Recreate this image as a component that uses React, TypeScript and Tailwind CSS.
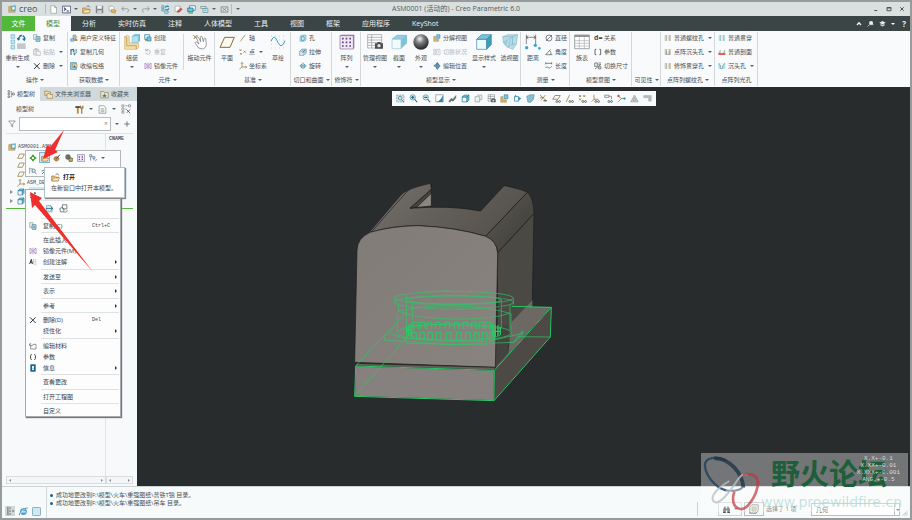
import type { ReactNode } from 'react';

type IconProps = { name: string; className?: string };

const cyan = '#7cc4dc';
const teal = '#2b7f9e';
const tan = '#d9b36c';
const ink = '#4a4f52';
const brown = '#8a6d2f';

const cube = (
  <g strokeLinejoin="round">
    <path d="M3 8h13v13H3z" fill="#f4fbfd" stroke={teal} strokeWidth="2" />
    <path d="M3 8l5-5h13l-5 5zM16 8l5-5v13l-5 5z" fill={cyan} stroke={teal} strokeWidth="2" />
  </g>
);

const folder = (
  <>
    <path d="M2 21V8h7l3 3h8v10z" fill="#e8c98e" stroke="#a8742c" strokeWidth="2" />
    <path d="M2 21l5-8h16l-4 8z" fill="#f8e7c4" stroke="#a8742c" strokeWidth="1.5" />
    <path d="M12 5c3-4 7-3 9 1" fill="none" stroke={ink} strokeWidth="2" />
  </>
);

const glasses = (
  <g fill="none" stroke={ink} strokeWidth="2">
    <circle cx="13" cy="20" r="2.5" />
    <circle cx="20" cy="20" r="2.5" />
  </g>
);

const mirror = (
  <path d="M3 3v18l6-5V8zM21 3v18l-6-5V8zM12 2v20" fill="none" stroke="#9a6cb4" strokeWidth="2" />
);

const camera = (
  <g>
    <path d="M11 14h3l1-2h4l1 2h3v8H11z" fill={ink} />
    <circle cx="17" cy="18" r="2.5" fill="#d8dcde" />
  </g>
);

const holes = (fill: string) => (
  <>
    <path d="M2 3h6v18H2zM15 3h6v18h-6z" fill={fill} />
    <path d="M8 3v18M15 3v18" stroke="#8a8e90" strokeWidth="1.5" />
  </>
);

// Small glyphs share a 24 unit box, ribbon glyphs a 48 unit one.
const small: Record<string, ReactNode> = {
  logo: (
    <>
      <path d="M2 5l8-2v12h11v7H2z" fill={tan} stroke={brown} />
      <path d="M10 4l12-2v14H10z" fill="#8fd0e4" stroke={teal} strokeWidth="1.5" />
      <path d="M13 7h6v6h-6z" fill="#fff" />
    </>
  ),
  new: <path d="M5 2h10l5 5v15H5zM15 2v5h5" fill="#fff" stroke="#85898b" strokeWidth="1.5" />,
  shell: (
    <>
      <path d="M1 3h22v18H1z" fill="#fff" stroke="#3a3f66" strokeWidth="2" />
      <path d="M5 7l5 4-5 4M12 16h7" fill="none" stroke="#3a3f66" strokeWidth="3" />
    </>
  ),
  folder,
  save: (
    <>
      <path d="M2 2h20v20H2z" fill="#85898c" />
      <path d="M6 2h12v8H6z" fill="#f2f4f4" />
      <path d="M6 14h12v8H6z" fill="#cfd3d4" />
    </>
  ),
  saveAs: (
    <>
      <path d="M3 3h9l4 4v8H3z" fill="#fff" stroke="#9a8a64" strokeWidth="1.5" />
      <path d="M9 11l12 3-2 8-11-3z" fill={tan} stroke={brown} />
    </>
  ),
  undo: <path d="M2 10h13c8 0 7 9 1 9M7 4l-5 6 5 6" fill="none" stroke="#84898b" strokeWidth="2" />,
  redo: <path d="M22 10H9c-8 0-7 9-1 9M17 4l5 6-5 6" fill="none" stroke="#84898b" strokeWidth="2" />,
  regen: (
    <>
      <path d="M2 2h6v6H2zM2 10h6v6H2zM10 16h9v6h-9z" fill="#bfe6f0" stroke={teal} strokeWidth="1.5" />
      <path d="M12 7c1-5 6-5 9-2M21 9c-1 5-6 5-9 2" fill="none" stroke={teal} strokeWidth="3" />
    </>
  ),
  erase: (
    <>
      <path d="M3 3h13v14H3z" fill="#fff" stroke="#8a8e90" strokeWidth="1.5" />
      <path d="M8 19l3-5 7-6 4 3-8 8z" fill="#d9534a" stroke="#84352f" />
    </>
  ),
  windows: (
    <>
      <path d="M7 2h15v12H7z" fill="#fff" stroke={teal} strokeWidth="2" />
      <path d="M2 8h14v10H2z" fill="#6fc5e4" stroke="#266786" strokeWidth="2" />
      <path d="M4 20h12v3H4z" fill="#41b24b" />
    </>
  ),
  close: <path d="M3 5h18v14H3zM7 8l10 8M17 8L7 16" fill="none" stroke="#777c7e" strokeWidth="2" />,
  screens: (
    <>
      <path d="M2 4h14v5H2zM8 9h13v11H8z" fill="#e8f3f6" stroke="#6f8d97" strokeWidth="2" />
      <path d="M11 12h7v5h-7z" fill={cyan} />
    </>
  ),
  copy: (
    <>
      <path d="M2 2h10v14H2z" fill="#eef4f6" stroke="#7b98a4" strokeWidth="2" />
      <path d="M9 8h12v14H9z" fill="#b5dbe6" stroke="#4c7c90" strokeWidth="2" />
      <path d="M12 13h7M12 17h7" stroke="#4c7c90" strokeWidth="1.5" />
    </>
  ),
  paste: (
    <>
      <path d="M2 4h15v17H2zM7 1h5v5H7z" fill="#e4e6e6" stroke="#b4b8ba" strokeWidth="2" />
      <path d="M10 10h12v12H10z" fill="#f6f7f8" stroke="#b4b8ba" strokeWidth="2" />
    </>
  ),
  delete: <path d="M3 4l17 17M20 4L3 21" stroke="#333739" strokeWidth="3" />,
  feature: (
    <>
      <path d="M2 14h9v8H2zM9 3h8v12H9z" fill="#9cc7e2" stroke="#4f7ea8" strokeWidth="1.5" />
      <circle cx="18" cy="9" r="4" fill={tan} />
      <path d="M13 15h9v6h-9z" fill="#c9813a" />
    </>
  ),
  copyGeom: (
    <>
      <path d="M3 3v18M3 7l7-4v9" fill="none" stroke="#2e5f86" strokeWidth="3" />
      <path d="M11 8l9-4v9l-8 8z" fill="#bcdcec" stroke={teal} strokeWidth="1.5" />
      <path d="M14 15v7" stroke={ink} strokeWidth="2" />
    </>
  ),
  shrink: (
    <>
      <path d="M2 2h17v20H2z" fill="#a7d9ea" stroke={teal} strokeWidth="2" />
      <path d="M7 6h14v10H7z" fill="#f1e2bd" stroke={brown} strokeWidth="1.5" />
      <path d="M9 16l4-7 5 7z" fill="#3e6690" />
    </>
  ),
  create: (
    <>
      <path d="M2 2h15v14H2z" fill="#dff1f6" stroke={teal} strokeWidth="2" />
      <path d="M9 9h12v12H9z" fill={cyan} stroke={teal} strokeWidth="2" />
      <path d="M3 18h7M6 15v7" stroke={brown} strokeWidth="2" />
    </>
  ),
  repeat: <path d="M7 6c7-4 13 2 11 8s-11 7-13 0M5 2v6h7" fill="none" stroke="#9b9fa1" strokeWidth="2" />,
  mirror,
  axis: <path d="M4 22L18 3" stroke={brown} strokeWidth="2" />,
  point: (
    <path d="M2 4l5 5M7 4L2 9M14 8l6 6M20 8l-6 6M3 15l5 5M8 15l-5 5" stroke={brown} strokeWidth="2" />
  ),
  csys: <path d="M9 2v13h14M9 15l-8 7M6 5l3-4 3 4M19 12l4 3-4 3" fill="none" stroke={brown} strokeWidth="2" />,
  hole: (
    <>
      <path d="M3 7l6-4h12v15l-6 4H3z" fill="#b8e0eb" stroke="#5a9db5" strokeWidth="1.5" />
      <path d="M8 8h7v11H8z" fill="#fff" stroke={teal} strokeWidth="2" />
    </>
  ),
  extrude: (
    <>
      <path d="M2 10l7-7h13v12l-7 7H2z" fill="#a8cfdf" stroke="#5b8ca3" strokeWidth="1.5" />
      <path d="M2 10h12v12H2z" fill="#dcebf0" stroke="#5b8ca3" />
      <path d="M10 14l9-8" stroke={ink} strokeWidth="2" />
    </>
  ),
  revolve: (
    <>
      <path d="M2 12l7-6v12zM22 12l-7-6v12z" fill="#8fc8dc" stroke={teal} strokeWidth="1.5" />
      <path d="M12 2v20" stroke={ink} strokeWidth="2" strokeDasharray="5 2" />
    </>
  ),
  explode: (
    <>
      <path d="M2 7h6v9h9v6H2z" fill={tan} stroke={brown} />
      <path d="M11 2h10v11H11z" fill={cyan} stroke={teal} strokeWidth="1.5" />
    </>
  ),
  state: (
    <path d="M2 4h6v6H2zM2 14h6v6H2zM11 4h10v16H11zM14 9h4M14 13h4" fill="none" stroke="#b8bcbe" strokeWidth="2" />
  ),
  editPos: (
    <path
      d="M9 7h9v9H9zM2 11l6-4v8zM22 12l-5-4v8zM13 1l4 5H9zM13 23l4-6H9z"
      fill="#5b9fc0"
      stroke="#2c5770"
      strokeWidth="1"
    />
  ),
  diameter: <path d="M12 3a9 9 0 100 18 9 9 0 000-18zM3 21L21 3" fill="none" stroke={ink} strokeWidth="2" />,
  angle: <path d="M2 20h20M2 20L17 4M14 8c4 3 4 8 3 12" fill="none" stroke={ink} strokeWidth="2" />,
  length: (
    <>
      <path d="M2 4h18M2 1v6M20 1v6" stroke={ink} strokeWidth="2" />
      <path d="M2 18c5-10 9 8 18-5" fill="none" stroke="#2d9cc0" strokeWidth="3" />
    </>
  ),
  switchDim: (
    <>
      <path d="M2 3h8v10H2zM13 3h8M13 8h8M3 21L20 8" fill="none" stroke={ink} strokeWidth="2" />
      <path d="M13 14h8v7h-8z" fill="#c7cbcd" stroke={ink} strokeWidth="1.5" />
    </>
  ),
  thread: holes('#d6ccb0'),
  sink: (
    <>
      {holes('#d6ccb0')}
      <path d="M7 10v9h9v-9" fill="none" stroke="#8a8e90" strokeWidth="2" />
    </>
  ),
  through: holes('#9fe8ee'),
  face: (
    <>
      <path d="M1 15h21v6H1z" fill="#e2604c" />
      <path d="M3 14l4-8v8zM16 14l4-8v8z" fill="#b7c6cc" stroke="#7c8a90" />
    </>
  ),
  counter: (
    <>
      <path d="M1 3h21v17H1z" fill="#9fe8ee" />
      <path d="M3 4l5 8v8h6v-8l6-8" fill="#f6f8f9" stroke="#6d8792" strokeWidth="2" />
    </>
  ),
  tree: (
    <path
      d="M3 2h5v5H3zM3 10h5v5H3zM3 18h5v5H3zM11 5h3v15h-3M14 12h3M17 9h5v6h-5z"
      fill="none"
      stroke={ink}
      strokeWidth="1.6"
    />
  ),
  folders: (
    <>
      <path d="M2 3h7l2 2h6v9H2z" fill="#f0dcae" stroke={brown} strokeWidth="1.5" />
      <path d="M8 10h6l2 2h7v10H8z" fill="#f6e6c2" stroke={brown} strokeWidth="1.5" />
    </>
  ),
  favorites: (
    <>
      <path d="M2 4h8l2 3h10v14H2z" fill="#f4e3b8" stroke={brown} strokeWidth="1.5" />
      <path d="M12 9l2 4 4 1-3 2 1 4-4-2-4 2 1-4-3-2 4-1z" fill="#2b7fb4" />
    </>
  ),
  tools: (
    <>
      <path d="M1 3h12v5H1z" fill={ink} />
      <path d="M5 8h5v15H5z" fill="#c98a3c" />
      <path d="M18 9v14M15 2v6h6V2" fill="none" stroke="#8a6a38" strokeWidth="3" />
    </>
  ),
  list: (
    <path d="M3 2h12l6 5v15H3zM7 10h10M7 14h10M7 18h10" fill="#fff" stroke="#6a6f71" strokeWidth="1.5" />
  ),
  treeFind: (
    <>
      <path d="M2 2h5v5H2zM2 10h5v5H2zM2 18h5v4H2zM10 4h6M10 12h3M18 2h5v5h-5z" fill="none" stroke="#777b7d" strokeWidth="1.5" />
      <path d="M13 13l9 9M14 21l8-8" stroke={ink} strokeWidth="2" />
    </>
  ),
  filter: <path d="M2 3h20l-8 9v9l-4-3v-6z" fill="#fff" stroke="#6e7376" strokeWidth="2" />,
  plus: <path d="M12 4v16M4 12h16" stroke="#777c7e" strokeWidth="3" />,
  plane: <path d="M8 6h14l-6 13H2z" fill="none" stroke={brown} strokeWidth="2" />,
  part: cube,
  target: (
    <>
      <path d="M12 1l4 6 7 5-7 5-4 6-4-6-7-5 7-5z" fill="#2f8f1e" />
      <circle cx="12" cy="12" r="4" fill="#e9f7d8" />
    </>
  ),
  brush: (
    <>
      <path d="M2 13c2-8 14-8 16 0s-14 14-16 0z" fill="#b88b48" stroke={brown} />
      <path d="M10 14L21 2" stroke={ink} strokeWidth="3" />
    </>
  ),
  sphereLock: (
    <>
      <circle cx="9" cy="9" r="8" fill="#6b6e70" />
      <path d="M12 12h10v10H12z" fill="#d7b266" stroke="#4b3f22" strokeWidth="2" />
    </>
  ),
  pattern: (
    <>
      <path d="M1 2h22v20H1z" fill="#f3eef7" stroke="#8769a4" strokeWidth="2" />
      <path d="M5 7h4v4H5zM14 7h4v4h-4zM5 14h4v4H5zM14 14h4v4h-4z" fill="#6d4f90" />
    </>
  ),
  relation: (
    <path d="M2 2h6v6H2zM12 8h6v6h-6zM8 5l4 6M5 8v12M15 14v5M19 22l4-7" fill="none" stroke="#537189" strokeWidth="2" />
  ),
  find: (
    <>
      <path d="M2 2v18M2 5h8v14" fill="none" stroke="#6b8797" strokeWidth="2" />
      <circle cx="14" cy="11" r="5" fill="#d6edf5" stroke="#4a6c7c" strokeWidth="2" />
      <path d="M17 15l5 7" stroke="#4a6c7c" strokeWidth="2" />
    </>
  ),
  insert: (
    <>
      <path d="M4 4h11l4 4v13H4z" fill="#c9eaf3" stroke="#5f8b9b" strokeWidth="1.5" />
      <path d="M2 12h18M15 7l6 5-6 5" fill="none" stroke="#23657f" strokeWidth="2" />
    </>
  ),
  replace: (
    <path d="M9 2h12v11H9zM2 12l6-3 5 4v8H4zM14 22c6 0 8-3 8-6" fill="#f6fbfd" stroke="#566268" strokeWidth="2" />
  ),
  note: (
    <>
      <path d="M2 18L7 4l3 14M4 13h6" fill="none" stroke="#333739" strokeWidth="3" />
      <path d="M14 3v17M17 5h5M17 10h5M17 15h5M17 20h5" fill="none" stroke="#8d9294" strokeWidth="1.5" />
    </>
  ),
  material: <path d="M5 21V11h5l2-4h9v14zM1 10l5-7M1 5v5h6" fill="none" stroke="#63686a" strokeWidth="2" />,
  params: <path d="M8 3c-5 4-5 14 0 18M16 3c5 4 5 14 0 18" fill="none" stroke="#333" strokeWidth="2.5" />,
  brackets: <path d="M7 4H3v16h4M16 4h4v16h-4" fill="none" stroke={ink} strokeWidth="2.5" />,
  info: (
    <>
      <path d="M4 1h16v22H4z" fill="#17628c" />
      <path d="M9 6h6v12H9z" fill="#fff" />
      <path d="M11 8h2v2h-2zM11 12h2v4h-2z" fill="#17628c" />
    </>
  ),
  edit: <path d="M3 21L20 4M2 12l7-2M15 3l6 6" stroke="#3b4143" strokeWidth="2" />,
  refit: (
    <>
      <path d="M2 3h19v18H2z" fill="#e6ecee" stroke="#7a8d95" strokeWidth="2" strokeDasharray="5 2" />
      <circle cx="11" cy="11" r="5" fill="#c2e7f3" stroke="#42788e" strokeWidth="2" />
      <path d="M15 15l6 7" stroke={ink} strokeWidth="2" />
    </>
  ),
  zoomIn: (
    <>
      <circle cx="10" cy="9" r="7" fill="#d9eff6" stroke="#4691ae" strokeWidth="2" />
      <path d="M6 9h8M10 5v8M15 14l7 8" stroke="#355e70" strokeWidth="3" />
    </>
  ),
  zoomOut: (
    <>
      <circle cx="10" cy="9" r="7" fill="#d9eff6" stroke="#4691ae" strokeWidth="2" />
      <path d="M6 9h8M15 14l7 8" stroke="#355e70" strokeWidth="3" />
    </>
  ),
  repaint: (
    <>
      <path d="M2 2h20v19H2z" fill="#fff" stroke="#8c9498" strokeWidth="2" />
      <path d="M21 3v18H3c8-2 14-8 18-18z" fill="#2f86a6" />
    </>
  ),
  spin: <path d="M2 19l7-8 4 3 8-10v6l-7 9-5-2-4 5z" fill="#6c7173" stroke={ink} />,
  layers: <path d="M3 7h12v14H3zM8 3h13v12h-6" fill="#eef2f3" stroke="#9ba3a6" strokeWidth="2" />,
  views: (
    <>
      <path d="M3 2h17v17H3zM3 7h17M3 12h17M9 2v17" fill="#fff" stroke="#7a8083" strokeWidth="1.5" />
      {camera}
    </>
  ),
  section: (
    <>
      <path d="M4 7h11v12H4z" fill="#fff" stroke={teal} strokeWidth="2" />
      <path d="M15 7l7 5-7 6zM7 1l3 6H4z" fill="#2f91b4" />
    </>
  ),
  persp: <path d="M2 6l8-4h12l-2 12-7 8H5z" fill="#86bdd0" stroke="#5590a8" strokeWidth="1.5" />,
  datums: (
    <>
      <path d="M3 3l16 14M17 3L5 17M2 10h8" stroke={brown} strokeWidth="2" />
      <path d="M12 18h9" stroke={ink} strokeWidth="3" />
    </>
  ),
  planeView: (
    <>
      <path d="M8 4h14l-6 10H2z" fill="none" stroke={brown} strokeWidth="2" />
      {glasses}
    </>
  ),
  axisView: (
    <>
      <path d="M3 21L12 3" stroke={brown} strokeWidth="2" />
      {glasses}
    </>
  ),
  pointView: (
    <>
      <path d="M3 3l5 5M8 3L3 8M14 3l5 5M19 3l-5 5M3 12l5 5M8 12l-5 5" stroke={brown} strokeWidth="2" />
      {glasses}
    </>
  ),
  csysView: (
    <>
      <path d="M8 2v12h12M8 14l-6 6" fill="none" stroke={brown} strokeWidth="2" />
      {glasses}
    </>
  ),
  noteView: (
    <>
      <path d="M2 3h11v6H2zM13 6h7v8" fill="none" stroke="#777" strokeWidth="2" />
      {glasses}
    </>
  ),
  center: (
    <>
      <path d="M3 5l9 7h9M12 12l-8 8" fill="none" stroke="#3a8c5a" strokeWidth="2" />
      <circle cx="4" cy="5" r="3" fill="#c5453c" />
      <circle cx="20" cy="12" r="3" fill="#2f7fb0" />
    </>
  ),
  warn: <path d="M12 3l10 18H2zM12 9l4 8H8z" fill="#d6d9da" stroke="#9a9fa1" strokeWidth="2" />,
  flag: <path d="M2 4h20v15h-7v-9H2z" fill="#b5b9bb" stroke="#9a9fa1" strokeWidth="1" />,
  sidebar: (
    <>
      <path d="M0 0h24v24H0z" fill="#cfd6d8" />
      <path d="M7 2v20M12 3v4M12 10v4M12 17v4M17 12h5" stroke={ink} strokeWidth="2" />
    </>
  ),
  globe: (
    <>
      <circle cx="12" cy="12" r="9" fill="#4a9fcc" />
      <path d="M2 20C6 8 14 4 23 4M5 13h13" fill="none" stroke="#e5f4fa" strokeWidth="3" />
      <path d="M1 22C2 10 14 2 23 3" fill="none" stroke="#2c6f9a" strokeWidth="2" />
    </>
  ),
  pane: <rect x="1" y="1" width="22" height="22" rx="3" fill="#cfe8f3" stroke="#5f93ab" strokeWidth="2" />,
  binoculars: <path d="M3 21V11l4-7h3v5h4V4h3l4 7v10h-7v-7h-4v7z" fill="#4b4b4b" />,
  pick: (
    <>
      <path d="M2 7l5-5h15v14l-5 6H2z" fill="#f5f5f0" stroke="#6e6e66" strokeWidth="2" />
      <path d="M7 7h10v10H7z" fill="#a5d6ea" stroke="#6e6e66" />
      <path d="M9 9l7 7-7 2z" fill="#e9b440" />
    </>
  ),
  search: (
    <>
      <circle cx="14" cy="10" r="7" fill="#e8ecec" />
      <path d="M2 22l7-6h13" fill="none" stroke="#c9cfcf" strokeWidth="3" />
    </>
  ),
  cap: (
    <>
      <path d="M12 3l11 6-11 6L1 9z" fill="#e8ecec" />
      <path d="M5 13v6l7 3 7-3v-6l-7 4z" fill="#c9cfcf" />
    </>
  ),
  up: <path d="M4 16l8-9 8 9" fill="none" stroke="#f2f4f4" strokeWidth="5" />,
};

const large: Record<string, ReactNode> = {
  regenerate: (
    <>
      <path d="M3 2h11v11H3zM3 18h11v11H3zM3 34h11v11H3z" fill="#bfe6f1" stroke="#6fb4cb" strokeWidth="2" />
      <path d="M21 28h26v17H21z" fill="#c4c8ca" />
      <path d="M24 15l6-8M38 6c5 1 6 5 5 9" fill="none" stroke="#1f6f96" strokeWidth="4" />
      <path d="M20 11l4 9 8-6zM48 13l-5 9-7-8zM27 3l10-1-4 8z" fill="#1f6f96" />
    </>
  ),
  assemble: (
    <>
      <path d="M2 8l8-4 6 3v20h28v14l-7 5H2z" fill="#f1dba6" stroke={tan} strokeWidth="2" />
      <path d="M2 8l6 3v24h29v11" fill="none" stroke="#b9934a" strokeWidth="2" />
      <path d="M25 7l6-5h17v17l-6 6H25z" fill="#7cc9e0" stroke="#4fa3be" strokeWidth="2" />
      <path d="M25 7h17v18H25z" fill="#b3e3ef" />
    </>
  ),
  drag: (
    <>
      <path d="M4 4l12 10M16 3L5 15" stroke="#9a7b3a" strokeWidth="3" />
      <path
        d="M20 42l-10-14c-2-4 2-6 5-3l6 5-7-17c-1-4 4-6 6-2l6 12-1-13c0-4 5-4 6 0l3 13 2-9c1-3 5-2 5 1l2 15c0 8-5 14-12 15z"
        fill="#fff"
        stroke="#686d70"
        strokeWidth="2"
      />
    </>
  ),
  plane: <path d="M17 10h29L33 40H3z" fill="#fbf8f0" stroke={brown} strokeWidth="3" />,
  sketch: (
    <>
      <path d="M4 6h40M4 18h40M4 30h40M4 42h40" stroke="#9aa0a3" strokeWidth="2" strokeDasharray="2 10" />
      <path d="M3 22c9-22 15-10 20 2s14 18 22-4" fill="none" stroke="#2d9cc0" strokeWidth="3" />
    </>
  ),
  array: (
    <>
      <path d="M3 5l3-3h40v40l-3 3z" fill="#8769a4" />
      <path d="M3 5h40v40H3z" fill="#f1e9f5" stroke="#8769a4" strokeWidth="2" />
      {[14, 25, 36].map((y) => (
        <path key={y} d={`M9 ${y}h5M20 ${y}h5M31 ${y}h5`} stroke="#5f4384" strokeWidth="5" />
      ))}
    </>
  ),
  manage: (
    <>
      <path d="M2 2h42v40H2zM2 10h42M2 18h42M2 26h42M2 34h42M14 2v40" fill="#fff" stroke="#8e9496" strokeWidth="2" />
      <path d="M24 28h6l2-4h8l2 4h6v16H24z" fill="#4a4f52" />
      <circle cx="36" cy="35" r="5" fill="#dfe3e4" />
    </>
  ),
  cut: (
    <>
      <path d="M17 4h30v23L30 42V16H3z" fill="#91cfe2" stroke="#6fb0c8" strokeWidth="2" />
      <path d="M3 16h27v28H3z" fill="#f2fafc" stroke="#9cc8d6" strokeWidth="2" />
      <path d="M30 16L47 4v23L30 44z" fill="#7fc3da" />
    </>
  ),
  sphere: (
    <>
      <defs>
        <radialGradient id="ball" cx="42%" cy="30%" r="65%">
          <stop offset="0" stopColor="#f4f4f4" />
          <stop offset="0.45" stopColor="#77797a" />
          <stop offset="1" stopColor="#2c2d2e" />
        </radialGradient>
      </defs>
      <circle cx="24" cy="24" r="23" fill="url(#ball)" />
    </>
  ),
  style: (
    <g stroke="#3c86a3" strokeWidth="2" strokeLinejoin="round">
      <path d="M2 16h30v30H2z" fill="#effafd" />
      <path d="M2 16L16 2h30L32 16z" fill="#74c3da" />
      <path d="M32 16L46 2v30L32 46z" fill="#3e9dbb" />
    </g>
  ),
  perspective: (
    <g stroke="#7fb0c2" strokeWidth="1.5">
      <path d="M2 8L17 2h30l-4 29-10 15-18-7L4 25z" fill="#b5dbe7" />
      <path d="M2 8h29l16-6M31 8v22l12 1" fill="none" />
      <path d="M4 25l27-17v26L15 39z" fill="#9fcfde" />
      <path d="M15 39l6-26M25 42l4-28" stroke="#e9f6fa" />
    </g>
  ),
  distance: (
    <>
      <path d="M4 2v28M32 2v28M4 10h28M10 5l-6 5 6 5M26 5l6 5-6 5" fill="none" stroke={ink} strokeWidth="2" />
      <circle cx="5" cy="41" r="5" fill="#39a5cf" />
      <circle cx="31" cy="34" r="5" fill="#39a5cf" />
      <circle cx="43" cy="43" r="4" fill="#39a5cf" />
    </>
  ),
  table: (
    <>
      <path d="M2 3h44v41H2z" fill="#fff" stroke="#777c7f" strokeWidth="2" />
      <path d="M2 3h44v6H2z" fill="#8f9496" />
      <path d="M2 20h44M2 28h44M2 36h44M16 10v34M31 10v34" stroke="#a9aeb0" strokeWidth="2" />
    </>
  ),
};

const Icon = ({ name, className = 'size-2' }: IconProps) => (
  <svg viewBox="0 0 24 24" className={`${className} shrink-0`} aria-hidden="true">
    {small[name]}
  </svg>
);

const BigIcon = ({ name }: { name: string }) => (
  <svg viewBox="0 0 48 48" className="size-4" aria-hidden="true">
    {large[name]}
  </svg>
);

const Caret = ({ className = 'text-[#5a5f62]' }: { className?: string }) => (
  <svg viewBox="0 0 12 6" className={`h-0.5 w-1 shrink-0 ${className}`} aria-hidden="true">
    <path d="M0 0h12L6 6z" fill="currentColor" />
  </svg>
);

type Cmd = { icon: string; label: string; caret?: boolean; off?: boolean };

const Big = ({ icon, label, caret, width }: Cmd & { width: string }) => (
  <button className={`flex h-[42px] shrink-0 flex-col items-center pt-[3px] ${width}`}>
    <BigIcon name={icon} />
    <span className="mt-1 leading-2 whitespace-nowrap">{label}</span>
    {caret && (
      <span className="mt-1">
        <Caret />
      </span>
    )}
  </button>
);

const Stack = ({ items, className = '' }: { items: Cmd[]; className?: string }) => (
  <div className={`flex shrink-0 flex-col ${className}`}>
    {items.map((item) => (
      <button
        key={item.label}
        className={`flex h-3.5 items-center gap-0.5 whitespace-nowrap ${item.off ? 'text-[#b4b8ba]' : ''}`}
      >
        {item.icon === 'd=' ? <b className="w-2 text-[7px]">d=</b> : <Icon name={item.icon} />}
        <span>{item.label}</span>
        {item.caret && (
          <span className="ml-0.5">
            <Caret />
          </span>
        )}
      </button>
    ))}
  </div>
);

type GroupProps = { label: string; width: string; children?: ReactNode; caret?: boolean };

const Group = ({ label, width, children, caret = true }: GroupProps) => (
  <div className={`relative flex shrink-0 flex-col ${width}`}>
    <div className="flex h-[42px]">{children}</div>
    <button className="flex h-3.5 items-center justify-center gap-0.5 whitespace-nowrap">
      {label}
      {caret && <Caret />}
    </button>
    <i className="absolute top-px right-0 bottom-px w-px bg-[#d5d8da]" />
  </div>
);

const quickAccess = [
  { icon: 'new' },
  { icon: 'shell', caret: true },
  { icon: 'folder' },
  { icon: 'save' },
  { icon: 'saveAs' },
  { icon: 'undo', caret: true },
  { icon: 'redo', caret: true },
  { icon: 'regen' },
  { icon: 'erase' },
  { icon: 'windows' },
  { icon: 'screens', caret: true },
  { icon: 'close' },
];

const TitleBar = () => (
  <header className="relative flex h-3.5 shrink-0 items-center bg-[#dae0e0] pl-1.5">
    <Icon name="logo" />
    <span className="ml-[3px] w-6 text-[9px] leading-3 text-[#4f5557]">creo</span>
    <i className="ml-0.5 h-2.5 w-px bg-[#b5baba]" />
    <div className="ml-[3px] flex items-center gap-1">
      {quickAccess.map((item) => (
        <button key={item.icon} aria-label={item.icon} className="flex items-center gap-[3px]">
          <Icon name={item.icon} className="size-[9px]" />
          {item.caret && <Caret />}
        </button>
      ))}
    </div>
    <i className="ml-0.5 h-2.5 w-px bg-[#b5baba]" />
    <span className="ml-1">
      <Caret />
    </span>
    <h1 className="pointer-events-none absolute inset-x-0 text-center text-[7px] leading-3 text-[#55595b]">
      ASM0001 (活动的) - Creo Parametric 6.0
    </h1>
    <div className="ml-auto flex gap-[7px] pr-[5px] text-[#4e5355]">
      {['M5 18h12', 'M4 6h16v13H4zM4 8h16', 'M5 5l14 14M19 5L5 19'].map((d) => (
        <button key={d} aria-label="window control">
          <svg viewBox="0 0 24 24" className="size-1.5" fill="none" stroke="currentColor" strokeWidth="4">
            <path d={d} />
          </svg>
        </button>
      ))}
    </div>
  </header>
);

const tabs = ['分析', '实时仿真', '注释', '人体模型', '工具', '视图', '框架', '应用程序', 'KeyShot'];

const TabBar = () => (
  <nav className="flex h-[15px] shrink-0 items-stretch bg-[#3c4546] text-[7px] leading-3 text-[#eef0f0]">
    <button className="w-[33px] bg-[#53b83a] text-white">文件</button>
    <button className="bg-[#f8fafc] px-[11px] text-[#4d8a35]">模型</button>
    {tabs.map((tab) => (
      <button key={tab} className="px-[11px]">
        {tab}
      </button>
    ))}
    <div className="ml-auto flex items-center gap-[5px] pr-1">
      <Icon name="up" className="size-1.5" />
      <Icon name="search" className="size-[7px]" />
      <Icon name="cap" className="size-[7px]" />
      <Caret className="text-white" />
      <b className="ml-0.5 text-[8px]">?</b>
    </div>
  </nav>
);

const Ribbon = () => (
  <section className="flex h-14 shrink-0 overflow-hidden bg-[#f8fafc] text-[#4a4f52]">
    <Group label="操作" width="w-[66px]">
      <Big icon="regenerate" label="重新生成" caret width="w-[31px]" />
      <Stack
        items={[
          { icon: 'copy', label: '复制' },
          { icon: 'paste', label: '粘贴', caret: true, off: true },
          { icon: 'delete', label: '删除', caret: true },
        ]}
      />
    </Group>
    <Group label="获取数据" width="w-[52px]">
      <Stack
        className="pl-0.5"
        items={[
          { icon: 'feature', label: '用户定义特征' },
          { icon: 'copyGeom', label: '复制几何' },
          { icon: 'shrink', label: '收缩包络' },
        ]}
      />
    </Group>
    <Group label="元件" width="w-[95px]">
      <Big icon="assemble" label="组装" caret width="w-6" />
      <Stack
        className="w-[39px]"
        items={[
          { icon: 'create', label: '创建' },
          { icon: 'repeat', label: '重复', off: true },
          { icon: 'mirror', label: '镜像元件' },
        ]}
      />
      <i className="my-[3px] w-px bg-[#d5d8da]" />
      <Big icon="drag" label="拖动元件" width="w-[31px]" />
    </Group>
    <Group label="基准" width="w-[76px]">
      <Big icon="plane" label="平面" width="w-6" />
      <Stack
        className="w-[26px]"
        items={[
          { icon: 'axis', label: '轴' },
          { icon: 'point', label: '点', caret: true },
          { icon: 'csys', label: '坐标系' },
        ]}
      />
      <Big icon="sketch" label="草绘" width="w-[26px]" />
    </Group>
    <Group label="切口和曲面" width="w-[41px]">
      <Stack
        className="pl-2"
        items={[
          { icon: 'hole', label: '孔' },
          { icon: 'extrude', label: '拉伸' },
          { icon: 'revolve', label: '旋转' },
        ]}
      />
    </Group>
    <Group label="修饰符" width="w-[29px]">
      <Big icon="array" label="阵列" caret width="w-[29px]" />
    </Group>
    <Group label="模型显示" width="w-[160px]">
      <Big icon="manage" label="管理视图" caret width="w-7" />
      <Big icon="cut" label="截面" caret width="w-5" />
      <Big icon="sphere" label="外观" caret width="w-6" />
      <Stack
        className="w-[37px]"
        items={[
          { icon: 'explode', label: '分解视图' },
          { icon: 'state', label: '切换状况', off: true },
          { icon: 'editPos', label: '编辑位置' },
        ]}
      />
      <Big icon="style" label="显示样式" caret width="w-7" />
      <Big icon="perspective" label="透视图" width="w-[23px]" />
    </Group>
    <Group label="测量" width="w-[49px]">
      <Big icon="distance" label="距离" width="w-6" />
      <Stack
        items={[
          { icon: 'diameter', label: '直径' },
          { icon: 'angle', label: '角度' },
          { icon: 'length', label: '长度' },
        ]}
      />
    </Group>
    <Group label="模型意图" width="w-[62px]">
      <Big icon="table" label="族表" width="w-6" />
      <Stack
        items={[
          { icon: 'd=', label: '关系' },
          { icon: 'brackets', label: '参数' },
          { icon: 'switchDim', label: '切换尺寸' },
        ]}
      />
    </Group>
    <Group label="可见性" width="w-[29px]" />
    <Group label="点阵列螺纹孔" width="w-[54px]">
      <Stack
        className="pl-[3px]"
        items={[
          { icon: 'thread', label: '普通螺纹孔', caret: true },
          { icon: 'sink', label: '点阵沉头孔', caret: true },
          { icon: 'thread', label: '修饰贯穿孔', caret: true },
        ]}
      />
    </Group>
    <Group label="点阵列光孔" width="w-[43px]" caret={false}>
      <Stack
        className="pl-[3px]"
        items={[
          { icon: 'through', label: '普通贯穿' },
          { icon: 'face', label: '普通剖面' },
          { icon: 'counter', label: '沉头孔', caret: true },
        ]}
      />
    </Group>
  </section>
);

const treeRows = [
  { icon: 'plane', label: 'ASM_RIGHT' },
  { icon: 'plane', label: 'ASM_TOP' },
  { icon: 'plane', label: 'ASM_FRONT' },
  { icon: 'csys', label: 'ASM_DEF_CSYS' },
];

const ScrollBar = ({ className }: { className: string }) => (
  <div className={`flex h-2 items-center justify-between border border-[#d9dcde] bg-[#f3f5f6] px-0.5 text-[#8b9092] ${className}`}>
    <svg viewBox="0 0 6 9" className="h-[3px] w-0.5">
      <path d="M6 0v9L0 4z" fill="currentColor" />
    </svg>
    <svg viewBox="0 0 6 9" className="h-[3px] w-0.5">
      <path d="M0 0v9l6-5z" fill="currentColor" />
    </svg>
  </div>
);

const Sidebar = () => (
  <aside className="flex w-[135px] shrink-0 flex-col bg-[#f7f9fb] text-[#4a4f52]">
    <div className="flex h-3.5 bg-[#d2d9db] text-[6px]">
      <button className="flex w-[38px] items-center gap-0.5 bg-[#f7f9fb] pl-[5px]">
        <Icon name="tree" />
        模型树
      </button>
      <button className="flex w-[58px] items-center gap-0.5 pl-1 whitespace-nowrap">
        <Icon name="folders" className="size-[9px]" />
        文件夹浏览器
      </button>
      <button className="flex items-center gap-0.5 pl-0.5 whitespace-nowrap">
        <Icon name="favorites" className="size-[9px]" />
        收藏夹
      </button>
    </div>
    <div className="flex h-4 items-center pr-1.5 pl-3.5">
      <h2>模型树</h2>
      <div className="ml-auto flex items-center gap-[5px]">
        <Icon name="tools" className="size-[9px]" />
        <Caret />
        <Icon name="list" className="size-[9px]" />
        <Caret />
        <Icon name="treeFind" className="size-2.5" />
      </div>
    </div>
    <div className="flex h-3.5 items-center gap-[3px] pr-1.5 pl-1.5">
      <Icon name="filter" />
      <label className="relative flex flex-1">
        <input aria-label="Tree filter" className="h-3.5 w-full border border-[#b4bcc0] bg-white px-1 text-[6px] outline-none" />
        <span className="absolute top-px right-[3px] text-[7px] leading-3 text-[#888]">×</span>
      </label>
      <span className="px-px">
        <Caret />
      </span>
      <Icon name="plus" />
    </div>
    <div className="mx-1 mt-0.5 flex flex-1 flex-col border-t border-[#dfe3e5]">
      <div className="flex flex-1">
        <div className="flex w-[100px] flex-col border-r border-[#dfe3e5] pt-2 font-['Liberation_Mono'] text-[5px]">
          <div className="flex h-[9px] items-center gap-0.5 pl-0.5">
            <Icon name="logo" />
            ASM0001.ASM
          </div>
          {treeRows.map((row) => (
            <div key={row.label} className="flex h-[9px] items-center gap-0.5 pl-[11px]">
              <Icon name={row.icon} />
              {row.label}
            </div>
          ))}
          {['1', '2'].map((n) => (
            <div key={n} className="flex h-[9px] items-center gap-1 pl-1">
              <svg viewBox="0 0 9 12" className="h-1 w-[3px]">
                <path d="M0 0v12l9-6z" fill="#8b9092" />
              </svg>
              <Icon name="part" />
              {n === '1' && <span className="h-[9px] w-[60px] bg-[#cfeaf6]" />}
            </div>
          ))}
          <hr className="mt-[3px] -mr-7 border-t border-[#55b83a]" />
        </div>
        <div className="flex-1 pt-px pl-[3px] font-['Liberation_Mono'] text-[5px] leading-2 font-bold">CNAME</div>
      </div>
      <div className="mb-0.5 flex">
        <ScrollBar className="w-[100px]" />
        <ScrollBar className="flex-1" />
      </div>
    </div>
  </aside>
);

const viewTools = [
  'refit', 'zoomIn', 'zoomOut', 'repaint', 'spin', 'part', 'layers', 'views', 'explode', 'section',
  'persp', 'datums', 'planeView', 'axisView', 'pointView', 'csysView', 'noteView', 'center', 'warn', 'flag',
];

// Gear teeth along the back and the front of the ring under the turntable.
const backTeeth = [228, 248, 268, 293, 322, 350, 376, 401, 424, 444];
const frontTeeth = [222, 246, 270, 296, 326, 356, 384, 410, 434, 456];

const Model = () => (
  <svg viewBox="0 0 690 735" className="h-[245px] w-[230px]" role="img" aria-label="ASM0001">
    <defs>
      <linearGradient id="front" x1="0" y1="0" x2="1" y2="1">
        <stop offset="0" stopColor="#817c78" />
        <stop offset="1" stopColor="#88837f" />
      </linearGradient>
      <linearGradient id="roof" x1="0" y1="0" x2="1" y2="0.4">
        <stop offset="0" stopColor="#79746f" />
        <stop offset="0.5" stopColor="#64605c" />
        <stop offset="1" stopColor="#55524e" />
      </linearGradient>
      <linearGradient id="round" x1="0" y1="0" x2="0.6" y2="0.6">
        <stop offset="0" stopColor="#5d5a56" />
        <stop offset="1" stopColor="#494742" />
      </linearGradient>
    </defs>
    <g stroke="#1b1d1d" strokeWidth="2" strokeLinejoin="round">
      <path d="M473 248L582 130L577 390L470 592z" fill="#4b4944" />
      <path d="M515 455L577 390L577 411H634L463 601L466 592L505 548z" fill="#6c6965" stroke="none" />
      <path d="M577 390L515 455V411z" fill="#4b4944" stroke="none" />
      <path d="M463 601L634 412L631 501L462 692z" fill="#4d4a46" />
      <path d="M505 465V548L463 596L470 470z" fill="#45433f" stroke="none" />
      <path d="M210 114L270 68L274 42V108z" fill="#8b8681" />
      <path
        d="M51 240Q52 205 85 190L182 76Q200 55 272 40L274 58L210 115Q330 105 422 123L492 47Q540 56 562 67L437 199Q350 172 235 167Q160 167 90 187z"
        fill="url(#roof)"
      />
      <path d="M210 115L274 58V70L232 110z" fill="#45433f" />
      <path d="M437 199L562 67Q580 80 582 130L473 248Q470 212 437 199z" fill="url(#round)" />
      <path d="M92 188L207 58" fill="none" />
      <path
        d="M44 577L51 240Q52 205 90 187Q160 167 235 167Q350 172 437 199Q470 212 473 250L466 592z"
        fill="url(#front)"
      />
      <path d="M47 580L466 592L463 601L47 588z" fill="#64605c" />
      <path d="M47 588L463 601L462 692L44 679z" fill="#86817e" />
    </g>
    <g fill="none" stroke="#2cc866" strokeWidth="2">
      <path d="M47 588L463 601L462 692L44 679zM463 601L634 412L631 501L462 692M515 409L634 412" strokeWidth="3" />
      <path d="M47 588L200 425M44 679L235 462M535 500L631 501" />
      <ellipse cx="342" cy="384" rx="178" ry="20" />
      <ellipse cx="342" cy="390" rx="142" ry="12" />
      <ellipse cx="342" cy="397" rx="178" ry="20" strokeDasharray="40 6" />
      <path d="M164 384v14M520 384v20M175 398v28M510 404v26M300 363h30" />
      <path d="M175 424Q230 446 342 447T510 430M175 424Q240 406 342 408T510 430" />
      <path d="M172 430v52M200 375v145M217 395v75M484 385v90M510 430v50M513 430v52" />
      <path d="M133 500L170 467M548 482L520 517L330 524L133 510M148 490L190 505L440 515L548 490M133 500v10M548 482v10L520 520M200 520l240 5v-10" />
      <ellipse cx="342" cy="488" rx="172" ry="26" />
      <path d="M200 478Q210 460 342 465T482 478M200 492Q220 510 342 510T482 494" />
      <g strokeWidth="3">
        {backTeeth.map((x) => (
          <path key={x} d={`M${x - 7} 477v-20h14v20`} />
        ))}
        {frontTeeth.map((x) => (
          <path key={x} d={`M${x - 7} 508v-20h14v20`} />
        ))}
      </g>
      <path d="M200 470v24M206 464v32M213 462v38M458 462v38M466 464v36M474 466v32M481 470v24M200 480h16M458 484h24" strokeWidth="4" />
    </g>
  </svg>
);

const Viewport = () => (
  <main className="min-w-0 flex-1 bg-[#282c2d]">
    <div className="flex h-[83px] items-start justify-center pt-1">
      <div className="flex h-[15px] items-center bg-[#f8fafc] px-0.5">
        {viewTools.map((tool) => (
          <button key={tool} aria-label={tool} className="flex w-[13px] justify-center">
            <Icon name={tool} className="size-[9px]" />
          </button>
        ))}
      </div>
    </div>
    <div className="pl-[203px]">
      <Model />
    </div>
  </main>
);

const StatusBar = () => (
  <footer className="flex h-8 shrink-0 border-t border-[#cdd2d4] bg-[#f7fafa] text-[#4a4f52]">
    <div className="flex w-[45px] items-end gap-1 border-r border-[#d5d8da] pb-0.5 pl-[3px]">
      <Icon name="sidebar" className="size-2.5" />
      <Icon name="globe" className="size-[9px]" />
      <Icon name="pane" className="size-[9px]" />
    </div>
    <ul className="pt-1 pl-[3px] leading-2">
      <li className="flex items-center gap-[3px]">
        <i className="size-[3px] rounded-full bg-[#1d5f8a]" />
        成功地更改到F:\模型\火车\重强图纸\普铁T锦 目录。
      </li>
      <li className="flex items-center gap-[3px]">
        <i className="size-[3px] rounded-full bg-[#1d5f8a]" />
        成功地更改到F:\模型\火车\重强图纸\吊车 目录。
      </li>
    </ul>
    <div className="ml-auto flex items-end gap-0.5 pr-0.5 pb-0.5">
      <i className="mr-[18px] h-3.5 w-px bg-[#cdd2d4]" />
      <button aria-label="Find" className="flex h-3.5 w-6 items-center justify-center gap-[3px] border border-[#cfd3d4]">
        <Icon name="binoculars" className="size-[9px]" />
        <Caret />
      </button>
      <button aria-label="Selected items" className="flex h-3.5 w-5 items-center justify-center border border-[#b9bebf]">
        <Icon name="pick" className="size-2.5" />
      </button>
      <span className="w-[43px] leading-[14px] whitespace-nowrap">选择了 1 项</span>
      <label className="relative flex">
        <select aria-label="Selection filter" className="h-[13px] w-[89px] appearance-none border border-[#b9bebf] bg-white pl-1 text-[6px]">
          <option>几何</option>
        </select>
        <span className="absolute top-0 right-0 flex h-[13px] w-1.5 items-center justify-center border-l border-[#b9bebf]">
          <Caret />
        </span>
      </label>
      <svg viewBox="0 0 18 18" className="size-1.5" stroke="#9fa4a5" strokeWidth="2">
        <path d="M2 17L17 2M8 17l9-9M14 17l3-3" />
      </svg>
    </div>
  </footer>
);

type MenuItem = { label: string; icon?: string; keys?: string; sub?: boolean };

const menuGroups: MenuItem[][] = [
  [{ label: '复制(C)', icon: 'copy', keys: 'Ctrl+C' }],
  [{ label: '在此插入' }, { label: '镜像元件(M)', icon: 'mirror' }, { label: '创建注解', icon: 'note', sub: true }],
  [{ label: '发送至', sub: true }],
  [{ label: '表示', sub: true }],
  [{ label: '参考', sub: true }],
  [{ label: '删除(D)', icon: 'delete', keys: 'Del' }, { label: '挠性化', sub: true }],
  [{ label: '编辑材料', icon: 'material' }, { label: '参数', icon: 'params' }, { label: '信息', icon: 'info', sub: true }],
  [{ label: '查看更改' }],
  [{ label: '打开工程图' }],
  [{ label: '自定义' }],
];

const ContextMenu = () => (
  <div className="absolute top-[148px] left-[23px] w-24 text-[#3c4143]">
    <div className="h-[27px] border border-[#b2b7b9] bg-[#fbfcfd] px-px">
      <div className="flex h-[13px] items-center gap-px">
        {['target', 'folder', 'brush', 'sphereLock', 'pattern', 'relation'].map((name) => (
          <button
            key={name}
            aria-label={name}
            className={`flex h-[11px] w-[11px] items-center justify-center ${name === 'folder' ? 'border border-[#7db8d8] bg-[#d3ecf8]' : ''}`}
          >
            <Icon name={name} />
          </button>
        ))}
        <span className="ml-0.5">
          <Caret />
        </span>
      </div>
      <div className="flex h-[13px] items-center gap-1 pl-0.5">
        <Icon name="find" />
        <Icon name="edit" />
      </div>
    </div>
    <div className="mt-3 border border-[#a5aaac] bg-[#fdfdfe] shadow-[1px_1px_1px_#777]">
      <div className="flex h-2.5 items-center pl-[3px]">
        <Icon name="edit" />
      </div>
      <div className="ml-[15px] flex h-4 items-center gap-[5px] border-t border-[#e1e4e5] pl-1">
        <Icon name="insert" className="size-[9px]" />
        <Icon name="replace" className="size-[9px]" />
      </div>
      {menuGroups.map((group) => (
        <div key={group[0].label} className="odd:pt-0.5 even:pt-px">
          <i className="mr-px ml-[15px] block h-px bg-[#dfe2e3]" />
          <div className="pt-px">
            {group.map((item) => (
              <button key={item.label} className="flex h-[11px] w-full items-center pr-[3px] pl-[3px] text-left">
                <span className="w-3.5">{item.icon && <Icon name={item.icon} />}</span>
                <span className="whitespace-nowrap">{item.label}</span>
                {item.keys && <kbd className="ml-auto w-[25px] font-['Liberation_Mono'] text-[5px]">{item.keys}</kbd>}
                {item.sub && (
                  <svg viewBox="0 0 6 12" className="ml-auto h-1 w-0.5">
                    <path d="M0 0v12l6-6z" fill="#333" />
                  </svg>
                )}
              </button>
            ))}
          </div>
        </div>
      ))}
    </div>
    <div role="tooltip" className="absolute top-[17px] left-[19px] h-[31px] w-[81px] border border-[#a9c3d0] bg-white px-1.5 pt-1 shadow-[1px_1px_1px_#888]">
      <p className="flex items-center gap-[3px] leading-[11px] font-bold text-[#222]">
        <Icon name="folder" className="size-[9px]" />
        打开
      </p>
      <p className="leading-[10px] whitespace-nowrap">在新窗口中打开本模型。</p>
    </div>
  </div>
);

const Arrows = () => (
  <svg viewBox="0 0 110 150" className="pointer-events-none absolute top-[123px] -left-0.5 h-[150px] w-[110px]" fill="#f02f2c">
    <path d="M43 34L47 20L50 22L64 5L55 25L58 27z" />
    <path d="M30 67L42 73L39 76L93 147L35 80L32 83z" />
  </svg>
);

const Watermark = () => (
  <div className="pointer-events-none absolute right-0.5 bottom-1.5 h-[59px] w-[207px] bg-white/35">
    <svg viewBox="0 0 180 177" className="absolute top-0 left-0 h-[59px] w-[60px]" fill="none">
      <path d="M75 112C45 105 15 70 12 40S50 10 75 22" stroke="#25435c" strokeWidth="7" opacity="0.85" />
      <path d="M40 16C85 15 125 60 127 104" stroke="#1b3046" strokeWidth="11" opacity="0.75" />
      <path d="M75 112C95 116 115 112 124 104" stroke="#6d8193" strokeWidth="6" opacity="0.8" />
      <path d="M85 84C50 105 25 130 38 145S85 120 105 88S130 66 140 66" stroke="#b5c0c8" strokeWidth="6" opacity="0.8" />
      <path d="M125 66C155 58 174 70 170 98S140 172 118 168S92 140 100 116" stroke="#c2343c" strokeWidth="8" opacity="0.7" />
    </svg>
    <p className="absolute top-px left-[70px] font-['Noto_Sans_CJK_SC'] text-[29px] leading-9 font-bold whitespace-nowrap text-[#1c5f3a]">
      野火论坛
    </p>
    <p className="absolute right-1.5 bottom-0 font-['DejaVu_Sans'] text-[14px] leading-5 whitespace-nowrap text-[#9fd3d0]/60">
      www.proewildfire.cn
    </p>
    <p className="absolute top-0.5 right-2 text-center font-['Liberation_Mono'] text-[6px] leading-[7px] whitespace-pre text-[#d8dada]">
      {'X.X+-0.1\nX.XX+-0.01\nX.XXX+-0.001\nANG.+-0.5'}
    </p>
  </div>
);

export default function App() {
  return (
    <div className="relative flex min-h-screen flex-col border-2 border-[#979b9b] bg-[#f8fafc] font-['Open_Sans','Noto_Sans_CJK_SC',sans-serif] text-[6px] leading-2">
      <TitleBar />
      <TabBar />
      <Ribbon />
      <div className="flex flex-1">
        <Sidebar />
        <Viewport />
      </div>
      <StatusBar />
      <ContextMenu />
      <Arrows />
      <Watermark />
    </div>
  );
}
